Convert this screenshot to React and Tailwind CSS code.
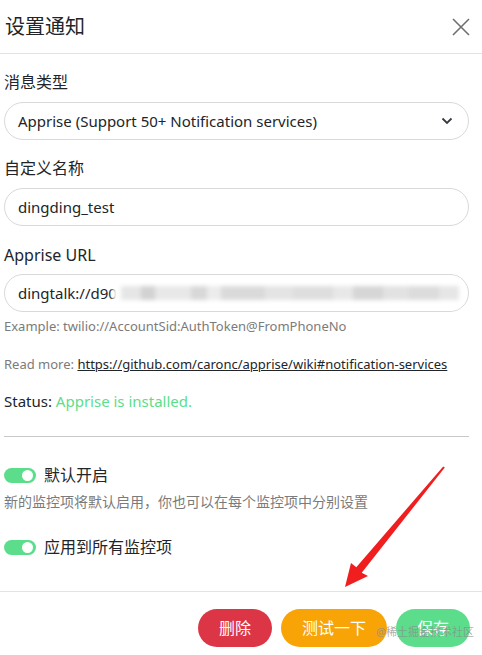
import React from "react";

const font = { fontFamily: '"Segoe UI", "Noto Sans", "Noto Sans CJK SC", sans-serif' };

function Toggle() {
  return (
    <div className="relative w-[32px] h-[15px] rounded-full bg-[#5cdd8b] shrink-0">
      <div className="absolute right-[3px] top-[2px] w-[11px] h-[11px] rounded-full bg-white" />
    </div>
  );
}

export default function App() {
  return (
    <div className="relative w-[482px] h-[655px] bg-white text-[#212529] overflow-hidden" style={font}>
      {/* Header */}
      <div className="h-[54px] flex items-center justify-between border-b border-[#e3e3e3] pl-[5px] pr-[10px]">
        <div className="text-[20px] leading-none text-[#212529]">设置通知</div>
        <svg width="18" height="18" viewBox="0 0 18 18" className="mr-[2px]">
          <path d="M1 1 L17 17 M17 1 L1 17" stroke="#6f6f6f" strokeWidth="1.6" />
        </svg>
      </div>

      {/* Body */}
      <div className="pl-[4px] pr-[13px] pt-[16px]">
        <div className="text-[16px] leading-[24px]">消息类型</div>
        <div className="mt-[8px] h-[38px] rounded-full border border-[#d9d9d9] flex items-center justify-between pl-[13px] pr-[15px] text-[15px]">
          <span>Apprise (Support 50+ Notification services)</span>
          <svg width="12" height="8" viewBox="0 0 12 8">
            <path d="M1.5 1.5 L6 6 L10.5 1.5" fill="none" stroke="#343a40" strokeWidth="1.8" />
          </svg>
        </div>

        <div className="mt-[16px] text-[16px] leading-[24px]">自定义名称</div>
        <div className="mt-[8px] h-[38px] rounded-full border border-[#d9d9d9] flex items-center pl-[13px] text-[15px]">
          dingding_test
        </div>

        <div className="mt-[17px] text-[16px] leading-[24px]">Apprise URL</div>
        <div className="mt-[7px] h-[38px] rounded-full border border-[#d9d9d9] flex items-center pl-[13px] text-[15px] relative overflow-hidden">
          <span>dingtalk://d90</span>
          <div className="absolute left-[108px] right-[6px] top-[1px] bottom-[1px] bg-white blur-[2px] flex items-center pl-[8px]">
            <div className="h-[14px] w-[20px] bg-[#e6e6e6]" />
            <div className="h-[14px] w-[14px] bg-[#d2d2d2]" />
            <div className="h-[14px] w-[36px] bg-[#e8e8e8]" />
            <div className="h-[14px] w-[16px] bg-[#d8d8d8]" />
            <div className="h-[14px] w-[14px] bg-[#ececec]" />
            <div className="h-[14px] w-[44px] bg-[#dadada]" />
            <div className="h-[14px] w-[28px] bg-[#e4e4e4]" />
            <div className="h-[14px] w-[40px] bg-[#dedede]" />
            <div className="h-[14px] w-[20px] bg-[#e8e8e8]" />
            <div className="h-[14px] w-[30px] bg-[#d6d6d6]" />
            <div className="h-[14px] w-[26px] bg-[#e2e2e2]" />
            <div className="h-[14px] w-[30px] bg-[#dcdcdc]" />
            <div className="h-[14px] w-[20px] bg-[#e6e6e6]" />
          </div>
        </div>

        <div className="mt-[5px] text-[13px] leading-[18px] text-[#7b7b7b]">
          Example: twilio://AccountSid:AuthToken@FromPhoneNo
        </div>
        <div className="mt-[20px] text-[13px] leading-[18px] text-[#7b7b7b]">
          Read more:{" "}
          <span className="underline text-[#212529]">https://github.com/caronc/apprise/wiki#notification-services</span>
        </div>
        <div className="mt-[17px] text-[15px] leading-[22px]">
          Status: <span className="text-[#5cdd8b]">Apprise is installed.</span>
        </div>

        <div className="mt-[24px] border-t border-[#c8c8c8]" />

        <div className="mt-[26px] flex items-center gap-[8px]">
          <Toggle />
          <span className="text-[16px] leading-[24px]">默认开启</span>
        </div>
        <div className="mt-[6px] text-[14px] leading-[18px] text-[#7b7b7b]">
          新的监控项将默认启用，你也可以在每个监控项中分别设置
        </div>
        <div className="mt-[24px] flex items-center gap-[8px]">
          <Toggle />
          <span className="text-[16px] leading-[24px]">应用到所有监控项</span>
        </div>
      </div>

      {/* Footer */}
      <div className="absolute left-0 right-0 top-[591px] border-t border-[#e3e3e3] flex justify-end gap-[9px] pr-[12px] pt-[17px]">
        <div className="h-[38px] w-[74px] rounded-full bg-[#dc3545] text-white text-[16px] flex items-center justify-center">删除</div>
        <div className="h-[38px] w-[106px] rounded-full bg-[#f8a306] text-white text-[16px] flex items-center justify-center">测试一下</div>
        <div className="h-[38px] w-[74px] rounded-full bg-[#5cdd8b] text-white text-[16px] flex items-center justify-center">保存</div>
      </div>

      {/* Watermark */}
      <div className="absolute left-[376px] top-[624px] whitespace-nowrap text-[11px] leading-[16px] text-[#8a8a8a]/70">@稀土掘金技术社区</div>

      {/* Red arrow annotation */}
      <svg className="absolute left-0 top-0 pointer-events-none" width="482" height="655">
        <polygon
          points="345,587 351,563 356.3,567.3 443.2,466.4 444.8,467.6 361.7,572.7 368,576"
          fill="#f01e1e"
        />
      </svg>
    </div>
  );
}
